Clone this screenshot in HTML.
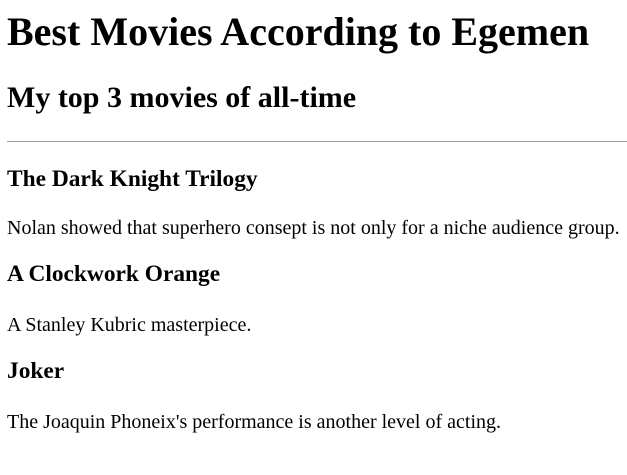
<!DOCTYPE html>
<html>
<head>
<meta charset="utf-8">
<style>
html,body{margin:0;padding:0;background:#fff;}
body{width:627px;height:475px;position:relative;overflow:hidden;font-family:"Liberation Serif",serif;color:#000;}
.t{position:absolute;left:7px;margin:0;line-height:1;white-space:nowrap;}
h1.t{font-size:40px;font-weight:bold;}
h2.t{font-size:30px;font-weight:bold;}
h3.t{font-size:23.4px;font-weight:bold;}
p.t{font-size:20px;}
.hr{position:absolute;left:7px;right:0;top:141px;height:1px;background:#a0a0a0;}
</style>
</head>
<body>
<h1 class="t" style="top:11.5px">Best Movies According to Egemen</h1>
<h2 class="t" style="top:82.9px">My top 3 movies of all-time</h2>
<div class="hr"></div>
<h3 class="t" style="top:168.4px">The Dark Knight Trilogy</h3>
<p class="t" style="top:218.3px">Nolan showed that superhero consept is not only for a niche audience group.</p>
<h3 class="t" style="top:263.4px">A Clockwork Orange</h3>
<p class="t" style="top:315.3px">A Stanley Kubric masterpiece.</p>
<h3 class="t" style="top:360.4px">Joker</h3>
<p class="t" style="top:412.3px">The Joaquin Phoneix's performance is another level of acting.</p>
</body>
</html>
